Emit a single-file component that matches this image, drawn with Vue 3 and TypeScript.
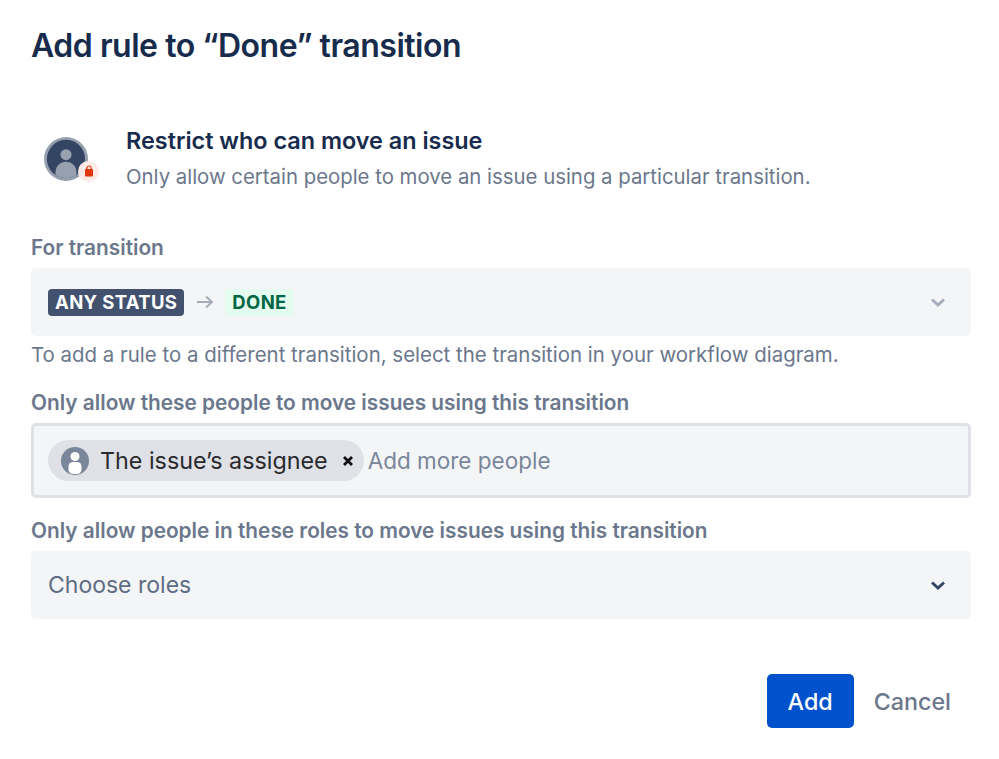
<script setup lang="ts">
const chevronPath = 'M2 2.5 L8 8 L14 2.5'
</script>

<template>
  <div class="dialog">
    <h1 class="title">Add rule to “Done” transition</h1>

    <div class="intro">
      <div class="avatar">
        <svg width="44" height="44" viewBox="0 0 46 46">
          <circle cx="23" cy="23" r="23" fill="#97a0af" />
          <circle cx="23" cy="23" r="20" fill="#344563" />
          <clipPath id="face"><circle cx="23" cy="23" r="20" /></clipPath>
          <g clip-path="url(#face)" fill="#97a0af">
            <circle cx="23" cy="18.5" r="5.8" />
            <rect x="12" y="26" width="22" height="24" rx="10.5" />
          </g>
        </svg>
        <span class="lock">
          <svg width="12" height="12" viewBox="0 0 12 12">
            <path d="M4 4 V3 a2 2 0 0 1 4 0 V4" fill="none" stroke="#de350b" stroke-width="1.2" />
            <rect x="2" y="4" width="8" height="7.5" rx="1" fill="#de350b" />
          </svg>
        </span>
      </div>
      <div>
        <div class="intro-title">Restrict who can move an issue</div>
        <div class="intro-text">Only allow certain people to move an issue using a particular transition.</div>
      </div>
    </div>

    <div class="label first">For transition</div>
    <div class="field select">
      <span class="lozenge any">ANY STATUS</span>
      <svg class="arrow" width="20" height="16" viewBox="0 0 20 16">
        <path d="M2 8 H17 M11 2.5 L17 8 L11 13.5" fill="none" stroke="#a5adba" stroke-width="2" />
      </svg>
      <span class="lozenge done">DONE</span>
      <svg class="chevron" width="16" height="11" viewBox="0 0 16 11">
        <path :d="chevronPath" fill="none" stroke="#a5adba" stroke-width="3" />
      </svg>
    </div>
    <div class="hint">To add a rule to a different transition, select the transition in your workflow diagram.</div>

    <div class="label people-label">Only allow these people to move issues using this transition</div>
    <div class="people">
      <span class="chip">
        <svg width="28" height="28" viewBox="0 0 28 28">
          <circle cx="14" cy="14" r="14" fill="#7a869a" />
          <circle cx="14" cy="9.5" r="4.5" fill="#fff" />
          <rect x="7.5" y="15" width="13" height="12" rx="4.5" fill="#fff" />
        </svg>
        <span class="chip-text">The issue’s assignee</span>
        <svg class="chip-x" width="12" height="12" viewBox="0 0 12 12">
          <path d="M2 2 L10 10 M10 2 L2 10" stroke="#111" stroke-width="2.8" />
        </svg>
      </span>
      <span class="placeholder add-more">Add more people</span>
    </div>

    <div class="label roles-label">Only allow people in these roles to move issues using this transition</div>
    <div class="field select">
      <span class="placeholder roles">Choose roles</span>
      <svg class="chevron" width="16" height="11" viewBox="0 0 16 11">
        <path :d="chevronPath" fill="none" stroke="#344563" stroke-width="3" />
      </svg>
    </div>

    <div class="actions">
      <button class="btn primary">Add</button>
      <button class="btn link">Cancel</button>
    </div>
  </div>
</template>

<style scoped>
.dialog {
  width: 999px;
  height: 759px;
  box-sizing: border-box;
  padding: 26px 28px 0 31px;
  font-family: Inter, "Noto Sans", sans-serif;
  color: #172b4d;
  background: #fff;
  overflow: hidden;
}
.title {
  margin: 0;
  font-size: 32px;
  line-height: 40px;
  font-weight: 600;
  letter-spacing: -0.48px;
}
.intro {
  display: flex;
  align-items: center;
  gap: 38px;
  margin-top: 60px;
  padding-left: 13px;
}
.avatar {
  position: relative;
  width: 44px;
  height: 44px;
  flex: none;
}
.avatar > svg {
  display: block;
}
.lock {
  position: absolute;
  right: -11px;
  bottom: -1px;
  width: 21px;
  height: 21px;
  border-radius: 50%;
  background: #ffebe6;
  display: flex;
  align-items: center;
  justify-content: center;
}
.intro-title {
  font-size: 23.4px;
  line-height: 30px;
  font-weight: 600;
}
.intro-text {
  margin-top: 7px;
  font-size: 20.38px;
  line-height: 28px;
  color: #6b778c;
}
.label {
  font-size: 20.8px;
  line-height: 26px;
  font-weight: 600;
  color: #6b778c;
}
.label.first {
  margin-top: 44px;
}
.field {
  height: 68px;
  box-sizing: border-box;
  margin-top: 7px;
  padding: 0 25px 0 17px;
  background: #f4f5f7;
  border-radius: 5px;
}
.select {
  display: flex;
  align-items: center;
}
.lozenge {
  font-size: 18.5px;
  line-height: 27px;
  height: 27px;
  font-weight: 700;
  letter-spacing: 0.35px;
  padding: 0 7px;
  border-radius: 4px;
}
.any {
  background: #42526e;
  color: #fff;
}
.done {
  background: #e3fcef;
  color: #006644;
}
.arrow {
  margin: 0 10px 0 11px;
}
.chevron {
  margin-left: auto;
}
.hint {
  margin-top: 6px;
  font-size: 20.44px;
  line-height: 26px;
  color: #6b778c;
}
.people-label {
  margin-top: 22px;
}
.people {
  display: flex;
  align-items: center;
  height: 75px;
  box-sizing: border-box;
  margin-top: 7px;
  padding: 0 14px;
  background: #f4f5f7;
  border: 3px solid #dfe1e6;
  border-radius: 5px;
}
.chip {
  display: flex;
  align-items: center;
  height: 41px;
  padding: 0 10px 0 13px;
  border-radius: 21px;
  background: #dfe1e6;
}
.chip-text {
  margin-left: 11px;
  font-size: 23.3px;
  color: #292a2e;
}
.chip-x {
  margin-left: 14px;
}
.placeholder {
  font-size: 22.5px;
  color: #7a869a;
}
.roles {
  font-size: 23px;
  color: #5e6c84;
}
.add-more {
  margin-left: 4px;
}
.roles-label {
  margin-top: 20px;
}
.actions {
  display: flex;
  justify-content: flex-end;
  align-items: center;
  gap: 20px;
  margin-top: 55px;
  padding-right: 20px;
}
.btn {
  border: 0;
  font-family: inherit;
  font-size: 23.3px;
  font-weight: 500;
  padding: 0;
  background: none;
}
.primary {
  width: 87px;
  height: 54px;
  border-radius: 5px;
  background: #0052cc;
  color: #fff;
}
.link {
  color: #6b778c;
}
</style>
